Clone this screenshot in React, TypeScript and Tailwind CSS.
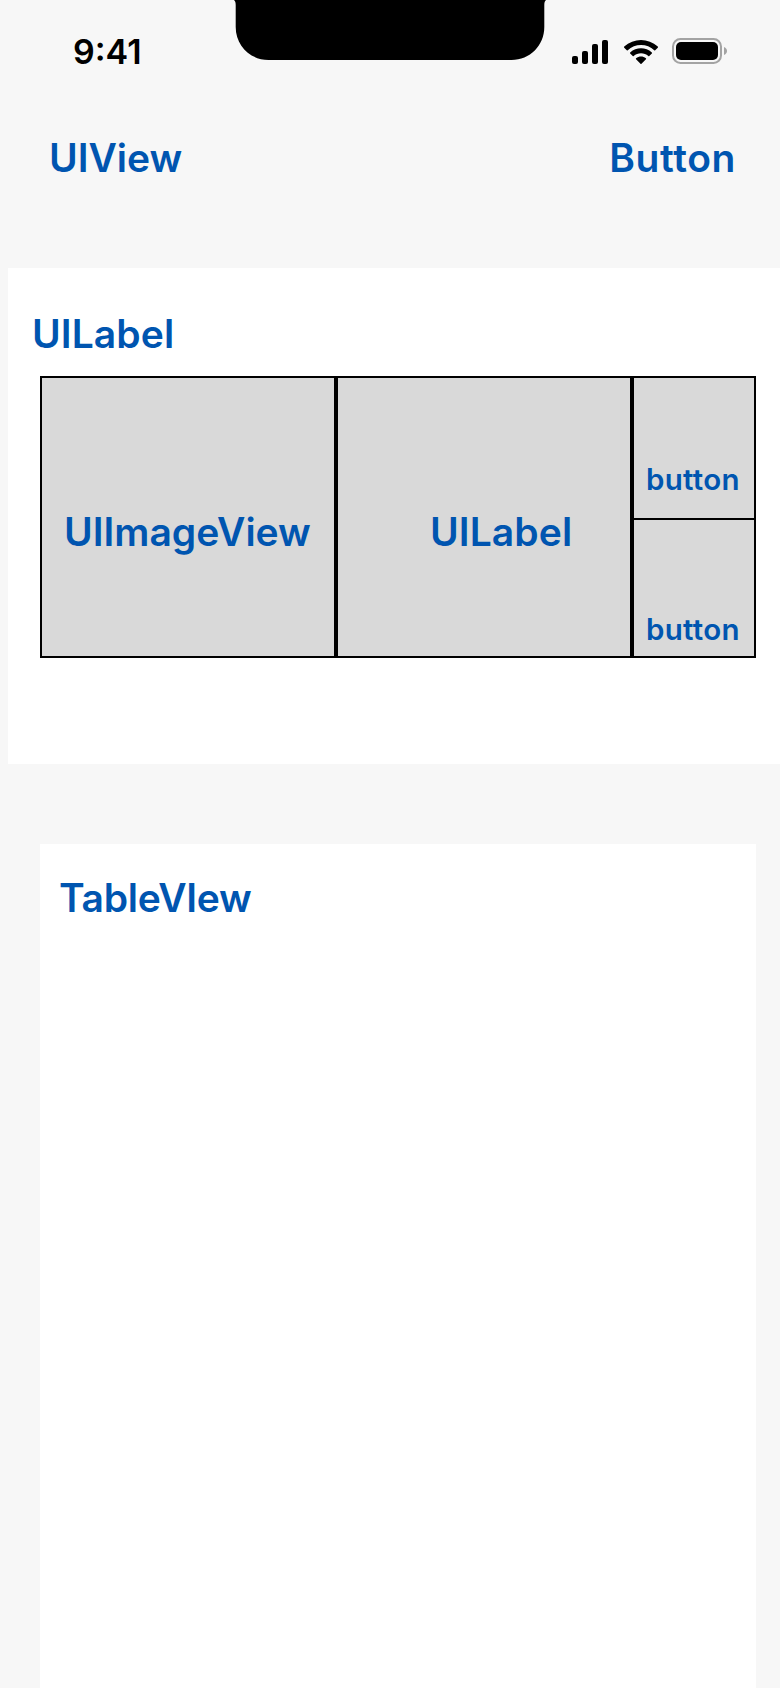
function Notch() {
  return (
    <svg className="block h-[60px] w-[312px] shrink-0" viewBox="0 0 312 60">
      <path d="M0 0C1.3 1.2 1.7 2.8 1.7 5V27C1.7 45.5 16 60 34.5 60H277.5C296 60 310.3 45.5 310.3 27V5C310.3 2.8 310.7 1.2 312 0Z" fill="#000" />
    </svg>
  );
}

function StatusIcons() {
  return (
    <div className="flex h-[26px] items-end pl-[26px]">
      <svg className="block h-[26px] w-[36px]" viewBox="0 0 36 26">
        <rect x="0" y="18" width="6" height="8" rx="2" />
        <rect x="10" y="13" width="6" height="13" rx="2" />
        <rect x="20" y="6" width="6" height="20" rx="2" />
        <rect x="30" y="2" width="6" height="24" rx="2" />
      </svg>
      <svg className="ml-4 block h-6 w-[34px]" viewBox="0 0 15.33 11" preserveAspectRatio="none">
        <path d="M7.667 2.28C9.89 2.28 12.03 3.14 13.64 4.67C13.76 4.79 13.95 4.79 14.07 4.67L15.23 3.5C15.29 3.44 15.33 3.35 15.33 3.27C15.33 3.18 15.29 3.1 15.23 3.03C11 -1.01 4.33 -1.01 .1 3.03C.04 3.1 0 3.18 0 3.27C0 3.35 .03 3.44 .1 3.5L1.26 4.67C1.38 4.79 1.57 4.79 1.69 4.67C3.3 3.14 5.44 2.28 7.667 2.28Z" />
        <path d="M7.667 6.08C8.89 6.08 10.07 6.53 10.97 7.35C11.09 7.47 11.28 7.46 11.4 7.35L12.56 6.17C12.62 6.11 12.65 6.03 12.65 5.94C12.65 5.85 12.62 5.76 12.55 5.7C9.8 3.14 5.54 3.14 2.79 5.7C2.72 5.76 2.69 5.85 2.69 5.94C2.69 6.03 2.72 6.11 2.78 6.17L3.94 7.35C4.06 7.46 4.25 7.47 4.37 7.35C5.27 6.53 6.45 6.08 7.667 6.08Z" />
        <path d="M9.99 8.63C9.99 8.72 9.96 8.8 9.9 8.86L7.89 10.88C7.83 10.94 7.75 10.97 7.667 10.97C7.58 10.97 7.5 10.94 7.44 10.88L5.43 8.86C5.37 8.8 5.34 8.71 5.34 8.63C5.34 8.54 5.38 8.46 5.45 8.4C6.73 7.32 8.6 7.32 9.88 8.4C9.95 8.46 9.99 8.54 9.99 8.63Z" />
      </svg>
      <svg className="ml-[14px] block h-[26px] w-[56px]" viewBox="0 0 56 26">
        <rect x="1" y="1" width="48" height="24" rx="7.5" fill="none" stroke="#a3a3a3" strokeWidth="2" />
        <rect x="4" y="4" width="42" height="18" rx="5" />
        <path d="M52 9C54 9.8 55 11.3 55 13S54 16.200 52 17Z" fill="#a3a3a3" />
      </svg>
    </div>
  );
}

export default function App() {
  return (
    <div className="flex h-[1688px] w-[780px] flex-col overflow-hidden bg-[#f7f7f7] font-['Inter',sans-serif] text-[39px] leading-[48px] font-semibold text-[#0055b0]">
      <header className="flex h-[134px] shrink-0 items-start">
        <div className="w-[234px] pt-8 pl-[73px] text-[34px] leading-10 text-black">9:41</div>
        <Notch />
        <div className="pt-[38px]">
          <StatusIcons />
        </div>
      </header>
      <nav className="flex h-[134px] shrink-0 items-start justify-between pr-[44px] pl-[49px]">
        <span>UIView</span>
        <button className="block tracking-[0.6px]">Button</button>
      </nav>
      <section className="ml-2 h-[496px] shrink-0 bg-white pt-[42px] pr-6 pl-8">
        <h2 className="-ml-2 h-[66px] tracking-[0.1px]">UILabel</h2>
        <div className="flex h-[282px] w-[716px] bg-[#d9d9d9]">
          <div className="w-[296px] border-2 border-black pt-[130px] pl-[22px]">UIImageView</div>
          <div className="w-[296px] border-2 border-black pt-[130px] pl-[92px] tracking-[0.1px]">UILabel</div>
          <div className="flex w-[124px] flex-col border-2 border-black text-[29.5px] leading-9 tracking-[0.3px]">
            <button className="flex h-[142px] items-start border-b-2 border-black pt-[83px] pl-3">button</button>
            <button className="flex flex-1 items-start pt-[91px] pl-3">button</button>
          </div>
        </div>
      </section>
      <section className="mt-[80px] mr-6 ml-10 flex-1 bg-white pt-[30px] pl-[19px]">
        <h2 className="tracking-[-0.3px]">TableVIew</h2>
      </section>
    </div>
  );
}
